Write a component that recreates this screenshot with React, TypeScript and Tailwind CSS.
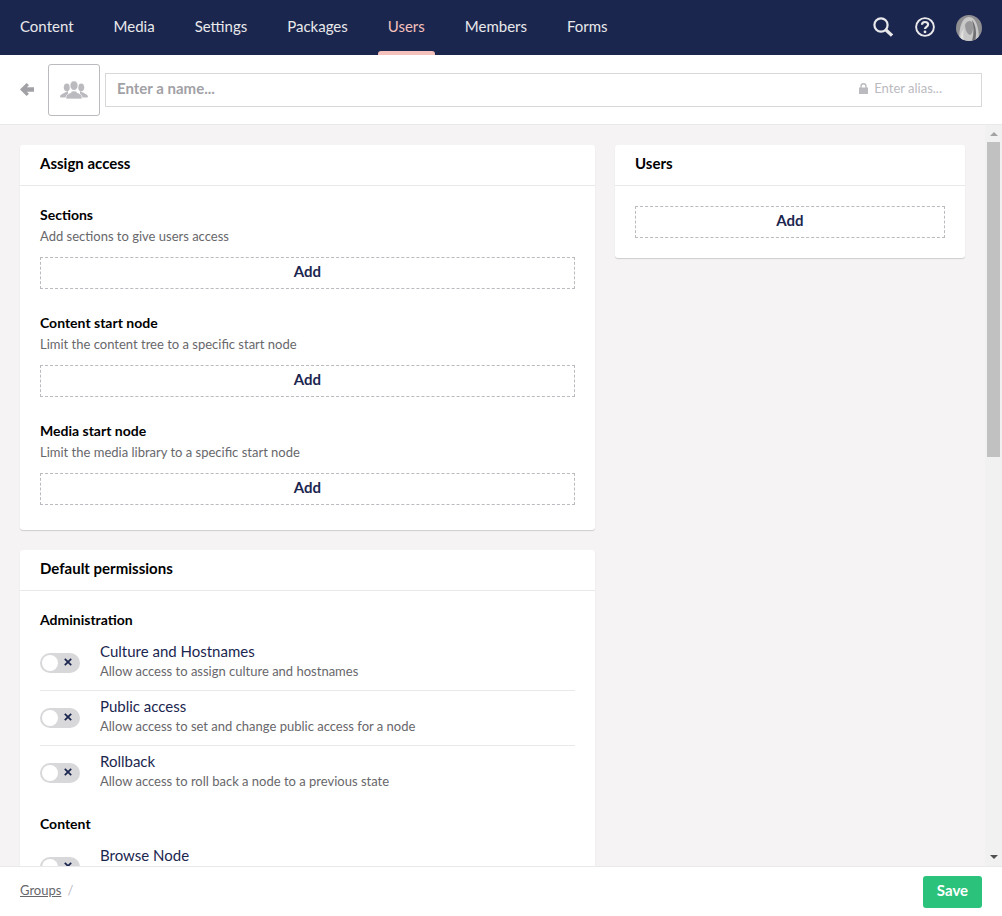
const navItems = [
  { label: "Content", active: false },
  { label: "Media", active: false },
  { label: "Settings", active: false },
  { label: "Packages", active: false },
  { label: "Users", active: true },
  { label: "Members", active: false },
  { label: "Forms", active: false },
];

function AddBox() {
  return (
    <button className="block w-full h-8 border border-dashed border-[#bbbabf] bg-white text-[15px] font-bold text-[#1b264f] leading-5 pb-[4px]">
      Add
    </button>
  );
}

function Field({ title, desc }: { title: string; desc: string }) {
  return (
    <div className="mb-6 last:mb-0">
      <div className="text-[14px] font-bold text-black leading-5">{title}</div>
      <div className="text-[13px] text-[#68676b] leading-5 mt-[1px] mb-[11px]">{desc}</div>
      <AddBox />
    </div>
  );
}

function Toggle() {
  return (
    <div className="relative w-10 h-5 rounded-full bg-[#d8d7d9] shrink-0">
      <div className="absolute left-[2px] top-[2px] w-4 h-4 rounded-full bg-white" />
      <svg viewBox="0 0 10 10" className="absolute left-[24px] top-[5px] w-2 h-2" fill="none" stroke="#1b264f" strokeWidth="2.2">
        <path d="M1 1 9 9M9 1 1 9" />
      </svg>
    </div>
  );
}

function Permission({ name, desc, last }: { name: string; desc: string; last?: boolean }) {
  return (
    <div className={`flex items-center h-[55px] border-b ${last ? "border-transparent" : "border-[#e9e9eb]"}`}>
      <Toggle />
      <div className="ml-5 pb-[4px]">
        <div className="text-[15px] text-[#1b264f] leading-5">{name}</div>
        <div className="text-[13px] text-[#68676b] leading-5">{desc}</div>
      </div>
    </div>
  );
}

function Card({ title, className, children }: { title: string; className?: string; children: React.ReactNode }) {
  return (
    <section className={`bg-white rounded-[3px] shadow-[0_1px_1px_rgba(0,0,0,0.16)] ${className ?? ""}`}>
      <div className="h-[41px] px-5 border-b border-[#e9e9eb] text-[15px] font-bold text-black leading-9">{title}</div>
      {children}
    </section>
  );
}

export default function App() {
  return (
    <div className="h-[916px] w-[1002px] flex flex-col overflow-hidden bg-white font-['Lato','Noto_Sans',sans-serif]">
      <header className="h-[55px] shrink-0 bg-[#1b264f] flex items-stretch justify-between pr-5">
        <nav className="flex">
          {navItems.map((item) => (
            <div
              key={item.label}
              className={`relative px-5 flex items-center pb-[3px] text-[15px] leading-none ${item.active ? "text-[#f5c1bc]" : "text-[#e9e9eb]"}`}
            >
              {item.label}
              {item.active && <span className="absolute left-2.5 right-2.5 bottom-0 h-1 rounded-t-[3px] bg-[#f5c1bc]" />}
            </div>
          ))}
        </nav>
        <div className="flex items-center">
          <svg viewBox="0 0 20 20" className="w-5 h-5 mr-[22px] mb-[1px]" fill="none" stroke="#e9e9eb">
            <circle cx="8" cy="8" r="6.6" strokeWidth="2.2" />
            <path d="m13 13 6 5.600" strokeWidth="3.2" />
          </svg>
          <svg viewBox="0 0 20 20" className="w-5 h-5 mr-[21px] mb-[1px]" fill="none" stroke="#e9e9eb">
            <circle cx="10" cy="10" r="8.900" strokeWidth="1.900" />
            <path d="M7 7.800C7 6 8.300 5 10 5s3.100 1 3.100 2.600c0 2.300-3.100 2.300-3.100 4.400" strokeWidth="2.200" />
            <circle cx="10" cy="14.900" r="1.400" fill="#e9e9eb" stroke="none" />
          </svg>
          <svg viewBox="0 0 26 26" className="w-[26px] h-[26px]">
            <defs>
              <clipPath id="av"><circle cx="13" cy="13" r="13" /></clipPath>
            </defs>
            <g clipPath="url(#av)">
              <rect width="26" height="26" fill="#8f8f92" />
              <path d="M3 26C3 12 6 2 13 2s10 10 10 24Z" fill="#c9c8c8" />
              <path d="M9 10c1-3 3-4 5-4s3 2 3 6-1 7-3 8c-3-1-5-6-5-10Z" fill="#98989a" />
              <path d="M16 5c4 5 5 14 3 21h-3c2-7 2-14 0-21Z" fill="#6f6f72" />
              <path d="M8 14c-1 4-1 8 0 12H5c-1-4 0-9 3-12Z" fill="#e2e1e0" />
            </g>
          </svg>
        </div>
      </header>

      <div className="h-[70px] shrink-0 border-b border-[#e9e9eb] flex items-center pl-5 pr-5">
        <svg viewBox="0 0 14 13" className="w-[14px] h-[13px] mr-[14px]" fill="#a2a1a6">
          <path d="M6.600 0 9 2.300 6.900 4.200H14v4.600H6.900L9 10.700 6.600 13 0 6.500Z" />
        </svg>
        <div className="w-[52px] h-[52px] shrink-0 border border-[#bbbabf] rounded-[3px] flex items-center justify-center mr-[5px]">
          <svg viewBox="0 0 28 18" className="w-[28px] h-[18px]" fill="#bbbabf">
            <ellipse cx="6.800" cy="6.300" rx="3" ry="3.900" />
            <ellipse cx="21.200" cy="6.300" rx="3" ry="3.900" />
            <path d="M0 16c0-2.500 2.500-3 5-4.500L8 10v6.500H1Z" />
            <path d="M28 16c0-2.500-2.500-3-5-4.500L20 10v6.500h7Z" />
            <ellipse cx="14" cy="4.600" rx="4" ry="4.800" stroke="#fff" strokeWidth="0.700" />
            <path d="M6 16.500c0-3 2.500-4 5-5l1-1.500h4l1 1.500c2.500 1 5 2 5 5V18H6Z" stroke="#fff" strokeWidth="0.700" />
          </svg>
        </div>
        <div className="flex-1 h-[34px] border border-[#d8d7d9] flex items-center justify-between pl-[11px] pr-[39px]">
          <span className="text-[15px] font-bold text-[#a2a1a6] pb-[2px]">Enter a name...</span>
          <span className="flex items-center text-[13px] text-[#bbbabf] pb-[2px]">
            <svg viewBox="0 0 10 12" className="w-[9px] h-[11px] mr-[6px]" fill="#bbbabf">
              <path d="M0 5h1.500V3.500a3.500 3.500 0 0 1 7 0V5H10v7H0ZM3 5h4V3.500a2 2 0 0 0-4 0Z" />
            </svg>
            Enter alias...
          </span>
        </div>
      </div>

      <div className="flex-1 min-h-0 flex bg-[#f5f3f4]">
        <main className="flex-1 min-w-0 overflow-hidden flex items-start gap-5 pl-5 pr-5 pt-5">
          <div className="w-[575px] shrink-0">
            <Card title="Assign access" className="pb-[25px]">
              <div className="px-5 pt-[19px]">
                <Field title="Sections" desc="Add sections to give users access" />
                <Field title="Content start node" desc="Limit the content tree to a specific start node" />
                <Field title="Media start node" desc="Limit the media library to a specific start node" />
              </div>
            </Card>
            <Card title="Default permissions" className="mt-5">
              <div className="px-5 pt-[19px]">
                <div className="text-[14px] font-bold text-black leading-5 mb-[6px]">Administration</div>
                <Permission name="Culture and Hostnames" desc="Allow access to assign culture and hostnames" />
                <Permission name="Public access" desc="Allow access to set and change public access for a node" />
                <Permission name="Rollback" desc="Allow access to roll back a node to a previous state" last />
                <div className="text-[14px] font-bold text-black leading-5 mt-[13px] mb-[6px]">Content</div>
                <Permission name="Browse Node" desc="Allow access to view a node" />
              </div>
            </Card>
          </div>
          <Card title="Users" className="w-[350px] shrink-0 pb-5">
            <div className="px-5 pt-5">
              <AddBox />
            </div>
          </Card>
        </main>
        <div className="w-[17px] shrink-0 flex flex-col items-center bg-[#f1f1f1]">
          <svg viewBox="0 0 8 4" className="w-2 h-1 mt-[7px] mb-[6px]" fill="#a3a3a3"><path d="M4 0 8 4H0Z" /></svg>
          <div className="w-[13px] h-[315px] bg-[#c1c1c1]" />
          <div className="flex-1" />
          <svg viewBox="0 0 8 4" className="w-2 h-1 mb-[7px]" fill="#505050"><path d="M0 0H8L4 4Z" /></svg>
        </div>
      </div>

      <footer className="h-[50px] shrink-0 border-t border-[#e9e9eb] bg-white flex items-center justify-between pl-5 pr-5">
        <div className="text-[13px] text-[#68676b] pb-[2px]">
          <span className="underline">Groups</span>
          <span className="ml-[6px] text-[#bbbabf]">/</span>
        </div>
        <button className="w-[59px] h-8 rounded-[3px] bg-[#2bc37c] text-white text-[15px] font-bold pb-[2px]">Save</button>
      </footer>
    </div>
  );
}
